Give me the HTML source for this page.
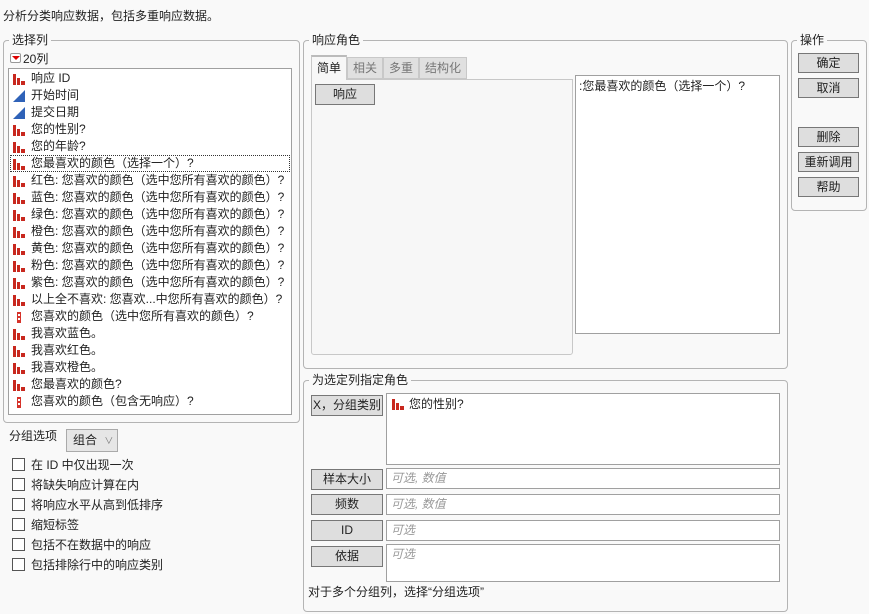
<!DOCTYPE html>
<html><head><meta charset="utf-8"><style>
*{box-sizing:border-box;margin:0;padding:0}
body{width:869px;height:614px;background:#f9f9f9;font-family:"Liberation Sans","Noto Sans CJK SC",sans-serif;font-size:12px;color:#222;position:relative;overflow:hidden;white-space:nowrap}
.a{position:absolute;white-space:nowrap}
.g{position:absolute;border:1px solid #b4b4b4;border-radius:4px}
.gl{position:absolute;top:-9px;left:5px;background:#f9f9f9;padding:0 3px;line-height:16px}
.btn{position:absolute;background:#dedede;border:1px solid #777;text-align:center;line-height:18px;font-size:12px}
.box{position:absolute;background:#fff;border:1px solid #a0a0a0}
.ph{color:#999;font-style:italic;padding-left:4px;line-height:18px}
.row{position:absolute;left:4px;width:278px;height:17px;line-height:17px;white-space:nowrap}
.row svg{position:absolute;left:0;top:3px}
.row span{position:absolute;left:18px;white-space:nowrap}
.cb{position:absolute;left:12px;width:13px;height:13px;border:1px solid #555;background:#fff}
.cbl{position:absolute;left:31px}
</style></head><body>
<svg width="0" height="0" style="position:absolute"><defs>
<symbol id="n" viewBox="0 0 12 12"><rect x="0" y="1" width="3" height="11" fill="#c8281e"/><rect x="4" y="5" width="3" height="7" fill="#c8281e"/><rect x="8" y="8" width="4" height="4" fill="#c8281e"/></symbol>
<symbol id="c" viewBox="0 0 12 12"><polygon points="0,12 12,0 12,12" fill="#2f62b8"/></symbol>
<symbol id="m" viewBox="0 0 12 12"><rect x="4" y="1" width="4" height="11" fill="#d6322a"/><rect x="5" y="3" width="2" height="2" fill="#fff"/><rect x="5" y="7" width="2" height="2" fill="#fff"/></symbol>
</defs></svg>
<div class="a" style="left:3px;top:7px">分析分类响应数据，包括多重响应数据。</div>

<div class="g" style="left:3px;top:40px;width:297px;height:383px"><div class="gl">选择列</div></div>
<div class="a" style="left:10px;top:53px;width:11px;height:10px;background:#fff;border:1px solid #999;border-radius:2px"></div>
<div class="a" style="left:12px;top:56px;width:0;height:0;border-left:4px solid transparent;border-right:4px solid transparent;border-top:4px solid #d00"></div>
<div class="a" style="left:23px;top:50px">20列</div>
<div class="box" style="left:8px;top:68px;width:284px;height:347px">
<div class="row" style="top:1px"><svg width="12" height="12"><use href="#n"/></svg><span>响应 ID</span></div>
<div class="row" style="top:18px"><svg width="12" height="12"><use href="#c"/></svg><span>开始时间</span></div>
<div class="row" style="top:35px"><svg width="12" height="12"><use href="#c"/></svg><span>提交日期</span></div>
<div class="row" style="top:52px"><svg width="12" height="12"><use href="#n"/></svg><span>您的性别?</span></div>
<div class="row" style="top:69px"><svg width="12" height="12"><use href="#n"/></svg><span>您的年龄?</span></div>
<div class="row" style="top:86px;left:1px;width:280px;border:1px dotted #333"><svg width="12" height="12" style="left:2px;top:2px"><use href="#n"/></svg><span style="left:20px;line-height:15px">您最喜欢的颜色（选择一个）?</span></div>
<div class="row" style="top:103px"><svg width="12" height="12"><use href="#n"/></svg><span>红色: 您喜欢的颜色（选中您所有喜欢的颜色）?</span></div>
<div class="row" style="top:120px"><svg width="12" height="12"><use href="#n"/></svg><span>蓝色: 您喜欢的颜色（选中您所有喜欢的颜色）?</span></div>
<div class="row" style="top:137px"><svg width="12" height="12"><use href="#n"/></svg><span>绿色: 您喜欢的颜色（选中您所有喜欢的颜色）?</span></div>
<div class="row" style="top:154px"><svg width="12" height="12"><use href="#n"/></svg><span>橙色: 您喜欢的颜色（选中您所有喜欢的颜色）?</span></div>
<div class="row" style="top:171px"><svg width="12" height="12"><use href="#n"/></svg><span>黄色: 您喜欢的颜色（选中您所有喜欢的颜色）?</span></div>
<div class="row" style="top:188px"><svg width="12" height="12"><use href="#n"/></svg><span>粉色: 您喜欢的颜色（选中您所有喜欢的颜色）?</span></div>
<div class="row" style="top:205px"><svg width="12" height="12"><use href="#n"/></svg><span>紫色: 您喜欢的颜色（选中您所有喜欢的颜色）?</span></div>
<div class="row" style="top:222px"><svg width="12" height="12"><use href="#n"/></svg><span>以上全不喜欢: 您喜欢...中您所有喜欢的颜色）?</span></div>
<div class="row" style="top:239px"><svg width="12" height="12"><use href="#m"/></svg><span>您喜欢的颜色（选中您所有喜欢的颜色）?</span></div>
<div class="row" style="top:256px"><svg width="12" height="12"><use href="#n"/></svg><span>我喜欢蓝色。</span></div>
<div class="row" style="top:273px"><svg width="12" height="12"><use href="#n"/></svg><span>我喜欢红色。</span></div>
<div class="row" style="top:290px"><svg width="12" height="12"><use href="#n"/></svg><span>我喜欢橙色。</span></div>
<div class="row" style="top:307px"><svg width="12" height="12"><use href="#n"/></svg><span>您最喜欢的颜色?</span></div>
<div class="row" style="top:324px"><svg width="12" height="12"><use href="#m"/></svg><span>您喜欢的颜色（包含无响应）?</span></div>
</div>

<div class="a" style="left:9px;top:427px">分组选项</div>
<div class="a" style="left:66px;top:429px;width:52px;height:23px;background:#e6e6e6;border:1px solid #aaa;line-height:21px;padding-left:6px">组合 <span style="color:#777;font-size:9px;margin-left:4px">∨</span></div>
<div class="cb" style="top:458px"></div><div class="a cbl" style="top:456px">在 ID 中仅出现一次</div>
<div class="cb" style="top:478px"></div><div class="a cbl" style="top:476px">将缺失响应计算在内</div>
<div class="cb" style="top:498px"></div><div class="a cbl" style="top:496px">将响应水平从高到低排序</div>
<div class="cb" style="top:518px"></div><div class="a cbl" style="top:516px">缩短标签</div>
<div class="cb" style="top:538px"></div><div class="a cbl" style="top:536px">包括不在数据中的响应</div>
<div class="cb" style="top:558px"></div><div class="a cbl" style="top:556px">包括排除行中的响应类别</div>

<div class="g" style="left:303px;top:40px;width:485px;height:329px"><div class="gl">响应角色</div></div>
<div class="a" style="left:311px;top:79px;width:262px;height:276px;background:#f7f7f7;border:1px solid #c8c8c8;border-radius:0 0 3px 3px"></div>
<div class="a" style="left:311px;top:55px;width:36px;height:25px;background:#f7f7f7;border:1px solid #c8c8c8;border-bottom:none;border-top:2px solid #bbb;text-align:center;line-height:22px">简单</div>
<div class="a" style="left:347px;top:57px;width:36px;height:22px;background:#e0e0e0;border:1px solid #c8c8c8;color:#777;text-align:center;line-height:20px">相关</div>
<div class="a" style="left:383px;top:57px;width:36px;height:22px;background:#e0e0e0;border:1px solid #c8c8c8;color:#777;text-align:center;line-height:20px">多重</div>
<div class="a" style="left:419px;top:57px;width:48px;height:22px;background:#e0e0e0;border:1px solid #c8c8c8;color:#777;text-align:center;line-height:20px">结构化</div>
<div class="btn" style="left:315px;top:84px;width:60px;height:21px">响应</div>
<div class="box" style="left:575px;top:75px;width:205px;height:259px;padding:2px 3px;line-height:16px">:您最喜欢的颜色（选择一个）?</div>

<div class="g" style="left:791px;top:40px;width:76px;height:171px"><div class="gl">操作</div></div>
<div class="btn" style="left:798px;top:53px;width:61px;height:20px">确定</div>
<div class="btn" style="left:798px;top:78px;width:61px;height:20px">取消</div>
<div class="btn" style="left:798px;top:127px;width:61px;height:20px">删除</div>
<div class="btn" style="left:798px;top:152px;width:61px;height:20px">重新调用</div>
<div class="btn" style="left:798px;top:177px;width:61px;height:20px">帮助</div>

<div class="g" style="left:303px;top:380px;width:485px;height:232px"><div class="gl">为选定列指定角色</div></div>
<div class="btn" style="left:311px;top:395px;width:72px;height:21px">X，分组类别</div>
<div class="box" style="left:386px;top:393px;width:394px;height:72px"><svg width="12" height="12" style="position:absolute;left:5px;top:4px"><use href="#n"/></svg><span style="position:absolute;left:22px;top:1px">您的性别?</span></div>
<div class="btn" style="left:311px;top:469px;width:72px;height:21px">样本大小</div>
<div class="box ph" style="left:386px;top:468px;width:394px;height:21px">可选, 数值</div>
<div class="btn" style="left:311px;top:494px;width:72px;height:21px">频数</div>
<div class="box ph" style="left:386px;top:494px;width:394px;height:21px">可选, 数值</div>
<div class="btn" style="left:311px;top:520px;width:72px;height:21px">ID</div>
<div class="box ph" style="left:386px;top:520px;width:394px;height:21px">可选</div>
<div class="btn" style="left:311px;top:546px;width:72px;height:21px">依据</div>
<div class="box ph" style="left:386px;top:544px;width:394px;height:38px">可选</div>
<div class="a" style="left:308px;top:583px">对于多个分组列，选择“分组选项”</div>
</body></html>
